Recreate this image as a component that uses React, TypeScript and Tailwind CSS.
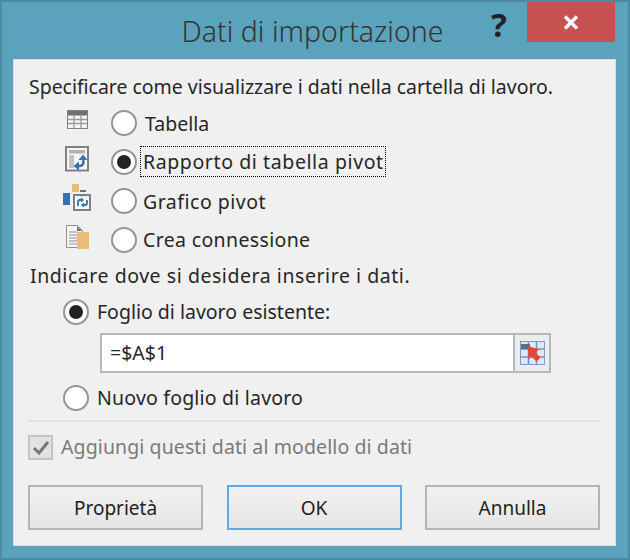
import React from "react"

const font = { fontFamily: '"Noto Sans", sans-serif' }

function Radio({ checked }: { checked?: boolean }) {
  return (
    <span className="flex h-[26px] w-[26px] shrink-0 items-center justify-center rounded-full border-[2px] border-[#949494] bg-white">
      {checked && <span className="h-[14px] w-[14px] rounded-full bg-[#222]" />}
    </span>
  )
}

function TableIcon() {
  return (
    <svg width="21" height="20" viewBox="0 0 21 20">
      <rect x="0.500" y="0.500" width="20" height="18" fill="#f4f4f4" stroke="#808080" />
      <rect x="1" y="1" width="19" height="4.500" fill="#6f6f6f" />
      <path d="M1 9.500h19M1 13.500h19M7 5v13M14 5v13" stroke="#9a9a9a" strokeWidth="1.300" fill="none" />
    </svg>
  )
}

function PivotIcon() {
  return (
    <svg width="24" height="26" viewBox="0 0 24 26">
      <rect x="1" y="1" width="22" height="23.500" fill="#f6f6f6" stroke="#808080" strokeWidth="2" />
      <rect x="4" y="4" width="16" height="3.500" fill="#b0b0b0" />
      <rect x="4" y="9" width="5" height="13" fill="#c4c4c4" />
      <path d="M11 20h3a4 4 0 0 0 4-6" fill="none" stroke="#2f72b5" strokeWidth="2.600" />
      <path d="M13.500 14l4.500-5.500 4.500 5.500zM14 15.500v9l-5.500-4.500z" fill="#2f72b5" />
    </svg>
  )
}

function PivotChartIcon() {
  return (
    <svg width="28" height="27" viewBox="0 0 28 27">
      <rect x="9" y="0" width="7" height="8" fill="#e8bd7a" />
      <rect x="0" y="9" width="7" height="12" fill="#2f72b5" />
      <rect x="17" y="6" width="6" height="2" fill="#707070" />
      <rect x="11" y="11" width="16" height="15" fill="#f6f6f6" stroke="#808080" strokeWidth="2" />
      <path d="M15 22v-4a2 2 0 0 1 2-2h2M24 16v3a2 2 0 0 1-2 2h-2" fill="none" stroke="#2f72b5" strokeWidth="1.800" />
      <path d="M18 13.500l3 2.500-3 2.500zM21 18.500l-3 2.500 3 2.500z" fill="#2f72b5" />
    </svg>
  )
}

function ConnectionIcon() {
  return (
    <svg width="23" height="24" viewBox="0 0 23 24">
      <path d="M0.500 0.500h11l5 5v17h-16z" fill="#f6f6f6" stroke="#909090" />
      <path d="M3 7h8M3 10h8M3 13h8M3 16h8M3 19h8" stroke="#909090" />
      <path d="M11 1l5 5h-5z" fill="#6f6f6f" />
      <rect x="11" y="7" width="12" height="17" fill="#e8bd7a" />
    </svg>
  )
}

function RangeIcon() {
  return (
    <svg width="25" height="24" viewBox="0 0 25 24">
      <rect x="0.500" y="0.500" width="24" height="23" fill="#dfe8f2" stroke="#7f9cc2" />
      <path d="M8.500 1v22M16.500 1v22M1 8h23M1 16h23" stroke="#6c90c2" strokeWidth="1.500" fill="none" />
      <rect x="1" y="3" width="9" height="5" fill="#55708f" />
      <path d="M8 5l11 3.500-3.500 3 5 5-4 4-5-5-3 3z" fill="#e8432e" />
    </svg>
  )
}

function Row({ icon, label, checked, labelClass }: { icon: React.ReactNode; label: string; checked?: boolean; labelClass: string }) {
  return (
    <div className="flex h-[39px] items-center">
      <div className="mb-[6px] flex w-[69px] shrink-0 justify-center pl-px">{icon}</div>
      <Radio checked={checked} />
      <span className={labelClass}>{label}</span>
    </div>
  )
}

function Btn({ label, primary }: { label: string; primary?: boolean }) {
  return (
    <button
      className={`h-[45px] w-[175px] border-[2px] bg-gradient-to-b from-[#f2f2f2] to-[#e5e5e5] pt-[2px] text-[19px] text-[#222] ${
        primary ? "border-[#5fa8f0]" : "border-[#b4b4b4]"
      }`}
    >
      {label}
    </button>
  )
}

export default function App() {
  return (
    <div className="flex h-[560px] w-[630px] flex-col border-[2px] border-[#4b8aa1] bg-[#5ba3bd] text-[#262626]" style={font}>
      <div className="relative flex h-[57px] shrink-0 justify-center pr-[5px] pt-[9px] text-[28.500px] font-light leading-[40px] text-[#333]">
        Dati di importazione
        <span className="absolute left-[489px] top-[4px] text-[33px] font-bold leading-[38px] text-[#222]">?</span>
        <div className="absolute left-[525px] top-0 flex h-[40px] w-[88px] items-center justify-center bg-[#c75050]">
          <svg width="16" height="15" viewBox="0 0 16 15">
            <path d="M2 1.500l12 12M14 1.500l-12 12" stroke="#fff" strokeWidth="3.500" fill="none" />
          </svg>
        </div>
      </div>
      <div className="mb-[12px] ml-[11px] mr-[12px] flex flex-1 flex-col border border-[#d5dfe4] bg-[#f0f0f0] pl-[14px] pr-[14px] text-[19.500px]">
        <p className="mt-[13px] pl-px leading-[28px] tracking-[-0.030px]">Specificare come visualizzare i dati nella cartella di lavoro.</p>
        <div className="mt-[2px] pl-[14px]">
          <Row icon={<TableIcon />} label="Tabella" labelClass="ml-[8px] pt-[2px]" />
          <Row
            icon={<PivotIcon />}
            label="Rapporto di tabella pivot"
            checked
            labelClass="ml-[3px] border border-dotted border-black pl-[2px] pr-px leading-[29px] tracking-[0.600px]"
          />
          <Row icon={<PivotChartIcon />} label="Grafico pivot" labelClass="ml-[6px] pt-[2px] tracking-[0.500px]" />
          <Row icon={<ConnectionIcon />} label="Crea connessione" labelClass="ml-[6px] pt-px tracking-[0.350px]" />
        </div>
        <p className="ml-[2px] mt-[3px] leading-[28px] tracking-[0.550px]">Indicare dove si desidera inserire i dati.</p>
        <div className="mt-[8px] flex items-center pl-[35px]">
          <Radio checked />
          <span className="ml-[8px] leading-[28px]">Foglio di lavoro esistente:</span>
        </div>
        <div className="ml-[72px] mt-[7px] flex h-[40px] w-[451px]">
          <div className="flex-1 border-[2px] border-r-0 border-[#b8b8b8] bg-white px-[8px] leading-[36px]">=$A$1</div>
          <div className="flex w-[38px] items-center justify-center border-[2px] border-[#b8b8b8] bg-[#ededed]">
            <RangeIcon />
          </div>
        </div>
        <div className="mt-[11px] flex items-center pl-[35px]">
          <Radio />
          <span className="ml-[8px] leading-[28px] tracking-[0.200px]">Nuovo foglio di lavoro</span>
        </div>
        <div className="mt-[8px] border-t-[2px] border-[#e3e3e3]" />
        <div className="mt-[11px] flex items-center text-[#7a7a7a]">
          <span className="flex h-[25px] w-[25px] items-center justify-center border-[2px] border-[#c4c4c4] bg-[#e2e2e2]">
            <svg width="18" height="15" viewBox="0 0 18 15">
              <path d="M2 8l5 5 9-11" stroke="#777" strokeWidth="3" fill="none" />
            </svg>
          </span>
          <span className="ml-[8px] leading-[28px] tracking-[0.100px]">Aggiungi questi dati al modello di dati</span>
        </div>
        <div className="mt-[24px] flex justify-between pr-px">
          <Btn label="Proprietà" />
          <Btn label="OK" primary />
          <Btn label="Annulla" />
        </div>
      </div>
    </div>
  )
}
